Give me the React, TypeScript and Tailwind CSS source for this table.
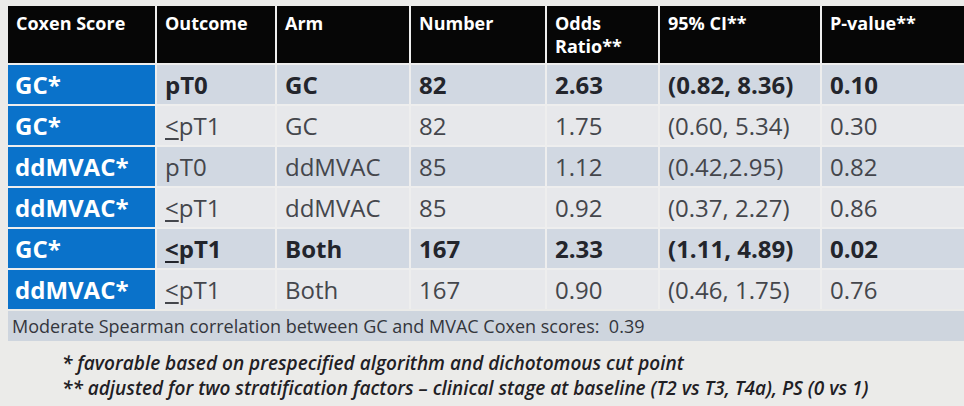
import React from "react";

type Row = {
  score: string;
  outcome: string;
  le: boolean;
  arm: string;
  n: string;
  or: string;
  ci: string;
  p: string;
  bold: boolean;
  shade: boolean;
};

const rows: Row[] = [
  { score: "GC*", outcome: "pT0", le: false, arm: "GC", n: "82", or: "2.63", ci: "(0.82, 8.36)", p: "0.10", bold: true, shade: true },
  { score: "GC*", outcome: "pT1", le: true, arm: "GC", n: "82", or: "1.75", ci: "(0.60, 5.34)", p: "0.30", bold: false, shade: false },
  { score: "ddMVAC*", outcome: "pT0", le: false, arm: "ddMVAC", n: "85", or: "1.12", ci: "(0.42,2.95)", p: "0.82", bold: false, shade: true },
  { score: "ddMVAC*", outcome: "pT1", le: true, arm: "ddMVAC", n: "85", or: "0.92", ci: "(0.37, 2.27)", p: "0.86", bold: false, shade: false },
  { score: "GC*", outcome: "pT1", le: true, arm: "Both", n: "167", or: "2.33", ci: "(1.11, 4.89)", p: "0.02", bold: true, shade: true },
  { score: "ddMVAC*", outcome: "pT1", le: true, arm: "Both", n: "167", or: "0.90", ci: "(0.46, 1.75)", p: "0.76", bold: false, shade: false },
];

const headers = ["Coxen Score", "Outcome", "Arm", "Number", "Odds Ratio**", "95% CI**", "P-value**"];

export default function App() {
  return (
    <div
      className="w-[964px] h-[406px] overflow-hidden bg-[#ebebe9] pt-[6px] pl-[8px]"
      style={{ fontFamily: '"Open Sans", "Noto Sans", sans-serif' }}
    >
      <div className="grid grid-cols-[147px_118px_132px_134px_111px_160px_1fr] grid-rows-[57px_repeat(6,39px)] gap-[2px] bg-[#eeeeee]">
        {headers.map((h, i) => (
          <div
            key={h}
            className={`bg-[#060606] text-white font-bold text-[18px] leading-[23px] pl-[8px] pt-[6px] ${i === 4 ? "pr-[20px]" : ""}`}
          >
            {h === "Odds Ratio**" ? (
              <>
                Odds
                <br />
                Ratio**
              </>
            ) : (
              h
            )}
          </div>
        ))}
        {rows.map((r, idx) => {
          const cellBg = r.shade ? "bg-[#d1d8e2]" : "bg-[#e7e8eb]";
          const txt = r.bold ? "font-bold text-[#23252c]" : "font-normal text-[#44464c]";
          const cell = `${cellBg} ${txt} text-[24px] leading-[39px] pl-[8px] whitespace-nowrap`;
          return (
            <React.Fragment key={idx}>
              <div className="bg-[#0a72ca] text-white font-bold text-[24px] leading-[39px] pl-[7px] whitespace-nowrap">
                {r.score}
              </div>
              <div className={cell}>
                {r.le ? <span className="underline decoration-[2px] underline-offset-[3px]">&lt;</span> : null}
                {r.outcome}
              </div>
              <div className={cell}>{r.arm}</div>
              <div className={cell}>{r.n}</div>
              <div className={cell}>{r.or}</div>
              <div className={cell}>{r.ci}</div>
              <div className={cell}>{r.p}</div>
            </React.Fragment>
          );
        })}
      </div>
      <div className="mt-[2px] h-[30px] bg-[#ced5de] text-[#34363c] text-[18px] leading-[30px] pl-[4px] whitespace-nowrap">
        Moderate Spearman correlation between GC and MVAC Coxen scores:&nbsp; 0.39
      </div>
      <div className="pl-[54px] pt-[10px] italic font-semibold text-[#1f2024] text-[19px] leading-[25px] whitespace-nowrap">
        <div>* favorable based on prespecified algorithm and dichotomous cut point</div>
        <div>** adjusted for two stratification factors – clinical stage at baseline (T2 vs T3, T4a), PS (0 vs 1)</div>
      </div>
    </div>
  );
}
